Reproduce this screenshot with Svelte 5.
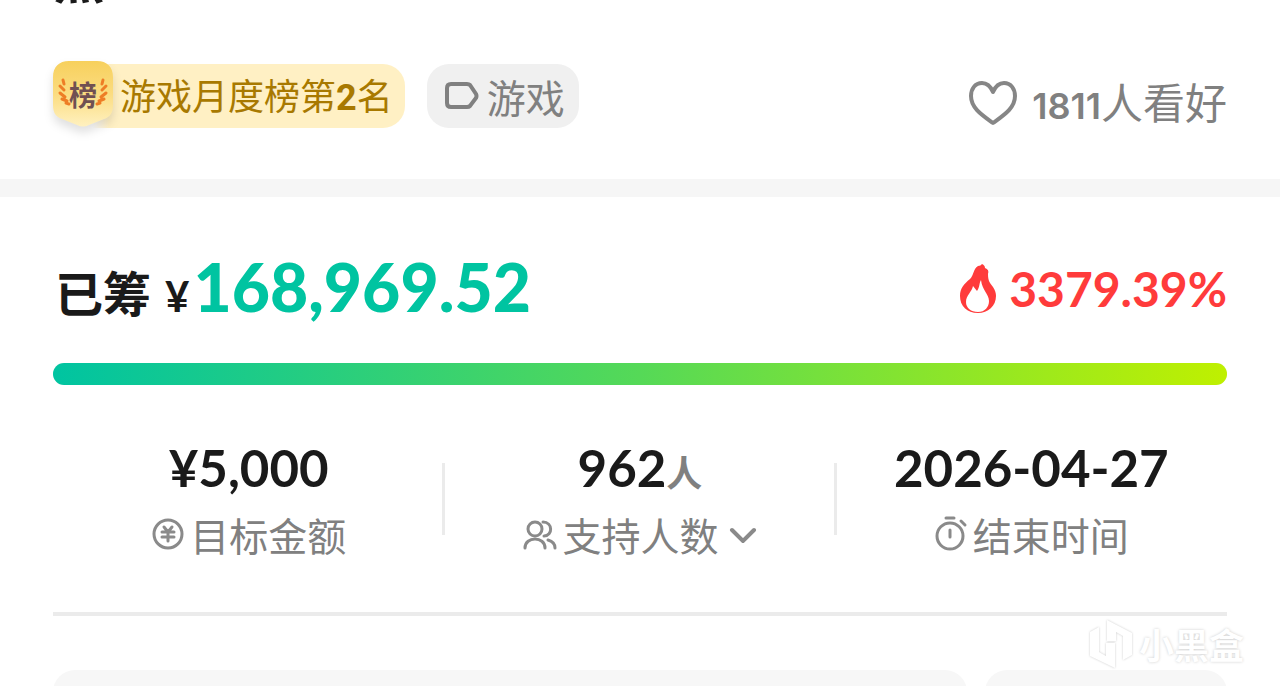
<script>
	const raised = '168,969.52';
	const percent = '3379.39%';
	const likes = 1811;
	const progress = 100;
</script>

<main class="page">
	<div class="title">
		<h1>熊</h1>
	</div>

	<section class="tags">
		<a class="rank" href="#rank">
			<span class="medal">
				<svg class="shield" viewBox="0 0 60 66" aria-hidden="true">
					<defs>
						<linearGradient id="gold" x1="0" y1="0" x2="0" y2="1">
							<stop offset="0" stop-color="#f7d05c" />
							<stop offset="0.5" stop-color="#fbdc80" />
							<stop offset="1" stop-color="#fff1c0" />
						</linearGradient>
					</defs>
					<path
						d="M16 0H44C54 0 60 6 60 16V44C60 52 57 56 51 58L36 64Q30 67 24 64L9 58C3 56 0 52 0 44V16C0 6 6 0 16 0Z"
						fill="url(#gold)"
					/>
					<g fill="none" stroke="#ee7d25" stroke-width="3" stroke-linecap="round">
						<path d="M10 19l1 4M7 25l4 4M7 32l5 4M9 38l5 2M13 42l3 1" />
						<path d="M50 19l-1 4M53 25l-4 4M53 32l-5 4M51 38l-5 2M47 42l-3 1" />
					</g>
				</svg>
				<b>榜</b>
			</span>
			<span class="rank_text">游戏月度榜第<b>2</b>名</span>
		</a>
		<a class="category" href="#games">
			<svg width="34" height="28" viewBox="0 0 34 28" aria-hidden="true">
				<path
					d="M6 2H22Q24 2 25 3L31 12Q32 14 31 16L25 24Q24 25 22 25H6Q2 25 2 21V6Q2 2 6 2Z"
					fill="none"
					stroke="#808080"
					stroke-width="4"
				/>
			</svg>
			游戏
		</a>
		<button class="likes">
			<svg width="50" height="46" viewBox="0 0 50 46" aria-hidden="true">
				<path
					d="M25 12C22 5 18 3 14 3C7 3 3 9 3 16C3 28 14 35 25 43C36 35 47 28 47 16C47 9 43 3 36 3C32 3 28 5 25 12Z"
					fill="none"
					stroke="#868686"
					stroke-width="4"
					stroke-linejoin="round"
				/>
			</svg>
			<span><b>{likes}</b>人看好</span>
		</button>
	</section>

	<section class="funding">
		<div class="summary">
			<p class="raised">已筹<span class="yen">¥</span><strong>{raised}</strong></p>
			<p class="percent">
				<svg width="38" height="50" viewBox="0 0 38 50" aria-hidden="true">
					<path
						fill="#ff3b3b"
						fill-rule="evenodd"
						d="M23 0C25 1 26 2 26 4C29 5 30 7 29 10C29 17 31 19 34 23C36 26 37 29 37 32C37 42 29 49 19 49C8 49 1 42 1 32C1 24 5 20 11 15C15 11 14 5 19 2C21 2 22 1 23 0ZM22 16C20 19 21 23 18 27L14 22C13 28 7 31 7 38C7 44 12 48 19 48C26 48 30 43 30 37C30 30 23 26 22 16Z"
					/>
				</svg>
				{percent}
			</p>
		</div>

		<div class="track"><div class="bar" style="width: {progress}%"></div></div>

		<div class="stats">
			<div class="stat">
				<p class="value">¥5,000</p>
				<p class="label">
					<svg width="34" height="34" viewBox="0 0 34 34" aria-hidden="true">
						<circle cx="17" cy="17" r="14" />
						<path d="M13 10l4 5 4-5M11 15h12M11 20h12M17 15v9" />
					</svg>
					目标金额
				</p>
			</div>
			<div class="stat">
				<p class="value">962<small>人</small></p>
				<button class="label">
					<svg width="34" height="34" viewBox="0 0 34 34" aria-hidden="true">
						<circle cx="12" cy="12" r="7" />
						<path d="M2 31C2 19 22 19 22 31M20 5C30 5 30 19 21 19M25 23Q32 25 32 31" />
					</svg>
					支持人数
					<svg class="chevron" width="28" height="18" viewBox="0 0 28 18" aria-hidden="true">
						<path d="M3 5L14 16L25 5" />
					</svg>
				</button>
			</div>
			<div class="stat">
				<p class="value">2026-04-27</p>
				<p class="label">
					<svg width="34" height="36" viewBox="0 0 34 36" aria-hidden="true">
						<circle cx="16" cy="20" r="13" />
						<path d="M16 14v7M12 2h8M27 5l4 4" />
					</svg>
					结束时间
				</p>
			</div>
		</div>

		<div class="cards">
			<div class="card"></div>
			<div class="card"></div>
		</div>
	</section>

	<div class="watermark">
		<svg width="44" height="50" viewBox="0 0 44 50" aria-hidden="true">
			<path d="M1 13L10 8V33L17 37V24H26V49L1 37ZM18 1L43 14V36L34 41V17L27 13V22H18Z" />
		</svg>
		小黑盒
	</div>
</main>

<style>
	:global(body) {
		margin: 0;
		background: #fff;
	}

	.page {
		position: relative;
		height: 100vh;
		overflow: hidden;
		color: #1a1a1a;
		font-family: 'Noto Sans CJK SC', sans-serif;
	}

	p,
	h1 {
		margin: 0;
	}

	button {
		padding: 0;
		border: none;
		background: none;
		font-family: inherit;
	}

	a {
		text-decoration: none;
	}

	.title {
		display: flex;
		align-items: flex-end;
		height: 4px;
		padding: 0 53px;
		overflow: hidden;
	}

	h1 {
		font-size: 52px;
		line-height: 54px;
	}

	.tags {
		display: flex;
		align-items: center;
		gap: 22px;
		height: 64px;
		padding: 60px 53px 51px;
		border-bottom: 18px solid #f6f6f6;
	}

	.rank,
	.category {
		display: flex;
		align-items: center;
		box-sizing: border-box;
		height: 64px;
		border-radius: 22px;
	}

	.rank {
		gap: 7px;
		padding-right: 12px;
		background: linear-gradient(90deg, transparent 40px, #fff0c4 56px);
		color: #a87900;
		font-size: 36px;
		line-height: 60px;
	}

	.rank_text b {
		font-family: Roboto, sans-serif;
		font-weight: 700;
	}

	.medal {
		position: relative;
		display: grid;
		place-items: center;
		width: 60px;
		height: 66px;
		margin-bottom: 4px;
	}

	.medal b {
		position: relative;
		color: #705052;
		font-size: 28px;
		line-height: 60px;
	}

	.shield {
		position: absolute;
		inset: 0;
		filter: drop-shadow(0 6px 5px rgba(0, 0, 0, 0.12));
	}

	.category {
		gap: 8px;
		padding: 0 14px 0 18px;
		background: #f0f0f0;
		color: #808080;
		font-size: 39px;
		line-height: 60px;
	}

	.likes {
		display: flex;
		align-items: center;
		gap: 14px;
		height: 64px;
		margin-top: 14px;
		margin-left: auto;
		color: #808080;
		font-size: 42px;
		line-height: 60px;
	}

	.likes b {
		font-family: Inter, sans-serif;
		font-size: 36px;
		font-weight: 600;
	}

	.funding {
		padding: 56px 53px 0;
	}

	.summary {
		display: flex;
		align-items: center;
		justify-content: space-between;
		height: 72px;
	}

	.raised {
		padding: 4px 0 0 2px;
		font-size: 48px;
		font-weight: 700;
		line-height: 72px;
	}

	.yen {
		margin: 0 4px 0 14px;
		font-family: Lato, sans-serif;
		font-size: 42px;
	}

	.raised strong {
		color: #00c4a1;
		font-family: Lato, sans-serif;
		font-size: 66px;
	}

	.percent {
		display: flex;
		align-items: center;
		gap: 12px;
		color: #ff3b3b;
		font-family: Lato, sans-serif;
		font-size: 48px;
		font-weight: 700;
		line-height: 60px;
	}

	.track {
		margin-top: 38px;
		border-radius: 11px;
		background: #eee;
	}

	.bar {
		height: 22px;
		border-radius: 11px;
		background: linear-gradient(90deg, #00c4a1, #55d957 50%, #bff000);
	}

	.stats {
		display: grid;
		grid-template-columns: repeat(3, 1fr);
		padding: 53px 0 50px;
		border-bottom: 4px solid #ebebeb;
	}

	.stat {
		position: relative;
		display: flex;
		flex-direction: column;
		align-items: center;
		gap: 8px;
	}

	.stat + .stat::before {
		content: '';
		position: absolute;
		top: 25px;
		left: -2px;
		width: 3px;
		height: 72px;
		background: #ebebeb;
	}

	.value {
		font-family: Lato, 'Noto Sans CJK SC', sans-serif;
		font-size: 51px;
		font-weight: 700;
		line-height: 60px;
	}

	.value small {
		color: #808080;
		font-size: 36px;
		line-height: 36px;
	}

	.label {
		display: flex;
		align-items: center;
		gap: 5px;
		color: #808080;
		font-size: 39px;
		line-height: 56px;
	}

	.label svg {
		fill: none;
		stroke: #8a8a8a;
		stroke-width: 3;
		stroke-linecap: round;
	}

	.label .chevron {
		margin-left: 5px;
		stroke-width: 4;
	}

	.cards {
		display: grid;
		grid-template-columns: 914fr 242fr;
		gap: 18px;
		margin-top: 54px;
	}

	.card {
		height: 80px;
		border-radius: 22px;
		background: #f7f7f7;
	}

	.watermark {
		position: absolute;
		right: 36px;
		bottom: 17px;
		display: flex;
		align-items: center;
		gap: 6px;
		color: #fff;
		font-size: 35px;
		font-weight: 700;
		line-height: 50px;
		text-shadow: 0 0 3px #ccc;
	}

	.watermark svg {
		fill: #fff;
		filter: drop-shadow(0 0 1px #ccc);
	}
</style>
